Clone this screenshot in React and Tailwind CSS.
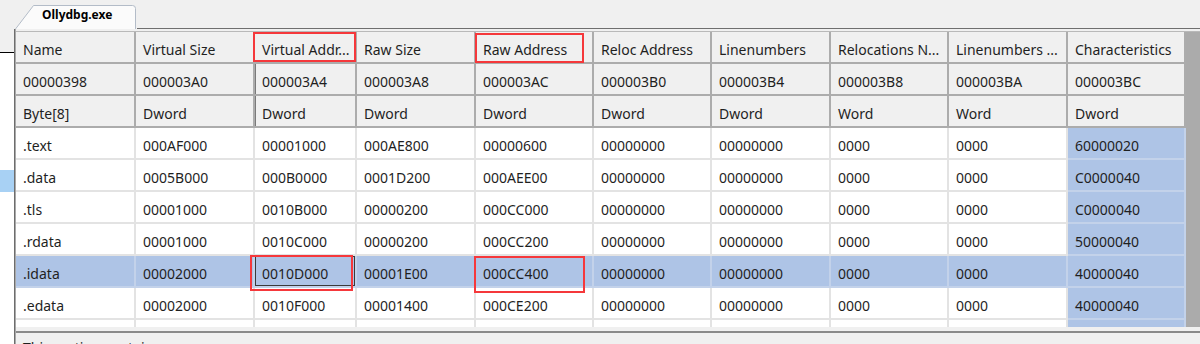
const widths = [
  "w-[120px]",
  "w-[119px]",
  "w-[102px]",
  "w-[119px]",
  "w-[118px]",
  "w-[118px]",
  "w-[119px]",
  "w-[118px]",
  "w-[119px]",
  "w-[118px]",
]

const headRows = [
  ["Name", "Virtual Size", "Virtual Addr...", "Raw Size", "Raw Address", "Reloc Address", "Linenumbers", "Relocations N...", "Linenumbers ...", "Characteristics"],
  ["00000398", "000003A0", "000003A4", "000003A8", "000003AC", "000003B0", "000003B4", "000003B8", "000003BA", "000003BC"],
  ["Byte[8]", "Dword", "Dword", "Dword", "Dword", "Dword", "Dword", "Word", "Word", "Dword"],
]

const sections = [
  [".text", "000AF000", "00001000", "000AE800", "00000600", "00000000", "00000000", "0000", "0000", "60000020"],
  [".data", "0005B000", "000B0000", "0001D200", "000AEE00", "00000000", "00000000", "0000", "0000", "C0000040"],
  [".tls", "00001000", "0010B000", "00000200", "000CC000", "00000000", "00000000", "0000", "0000", "C0000040"],
  [".rdata", "00001000", "0010C000", "00000200", "000CC200", "00000000", "00000000", "0000", "0000", "50000040"],
  [".idata", "00002000", "0010D000", "00001E00", "000CC400", "00000000", "00000000", "0000", "0000", "40000040"],
  [".edata", "00002000", "0010F000", "00001400", "000CE200", "00000000", "00000000", "0000", "0000", "40000040"],
  ["", "", "", "", "", "", "", "", "", ""],
]

const SELECTED_ROW = 4

const FileTab = () => (
  <div className="relative w-[122px] h-[29px] shrink-0">
    <svg className="absolute inset-0" width="122" height="29" viewBox="0 0 122 29">
      <path d="M0.5 29 L18.5 5.5 L117.5 5.5 Q120.5 5.5 120.5 8.5 L120.5 29" fill="#fbfbfb" stroke="#b3bcc8" />
    </svg>
    <div className="relative pt-[8px] pl-[27px] text-[12px] leading-[14px] font-bold text-black">Ollydbg.exe</div>
  </div>
)

const HeaderCell = ({ text, col, row }) => (
  <div
    className={`${widths[col]} h-[32px] shrink-0 flex items-center pt-[5px] pl-[7px] bg-[#f0f0f0] border-r-2 border-b-2 border-[#acacac] whitespace-nowrap overflow-hidden ${
      col === 2 && row > 0 ? "shadow-[inset_1px_0_0_#7a7a7a]" : ""
    }`}
  >
    {text}
  </div>
)

const DataCell = ({ text, col, row }) => {
  const blue = row === SELECTED_ROW || col === 9
  const focused = row === SELECTED_ROW && col === 2
  return (
    <div
      className={`${widths[col]} h-[32px] shrink-0 flex items-center pt-[5px] pl-[7px] border-r-2 border-b-2 whitespace-nowrap overflow-hidden ${
        blue ? "bg-[#aec4e6] border-[#c3d2ea]" : "bg-white border-[#e3e3e3]"
      } ${focused ? "shadow-[inset_0_0_0_1px_#3a3a3a]" : ""}`}
    >
      {text}
    </div>
  )
}

const Annotation = ({ className }) => (
  <div className={`absolute border-2 border-[#f5383b] pointer-events-none ${className}`} />
)

export default function App() {
  return (
    <div className="relative w-[1200px] h-[344px] bg-[#f0f0f0] overflow-hidden flex flex-col font-['Noto_Sans',sans-serif] text-[14px] text-[#1f1f1f]">
      {/* tab strip */}
      <div className="h-[29px] flex shrink-0">
        <div className="w-[15px] shrink-0" />
        <FileTab />
        <div className="flex-1 border-b border-[#6f6f6f]" />
      </div>

      <div className="flex flex-1 min-h-0">
        {/* edge of the tree pane behind */}
        <div className="w-[14px] shrink-0 flex flex-col">
          <div className="h-[23px] shrink-0" />
          <div className="flex-1 bg-white border-t border-black">
            <div className="h-[117px]" />
            <div className="h-[22px] bg-[#a8d1f4]" />
          </div>
        </div>
        <div className="w-[1px] bg-[#6d6d6d] shrink-0" />
        <div className="w-[1px] bg-[#a9a9a9] shrink-0" />

        <div className="flex-1 flex flex-col min-w-0">
          <div className="h-[2px] shrink-0" />
          <div className="h-[1px] bg-[#b9b9b9] shrink-0" />
          <div className="h-[295px] flex shrink-0 overflow-hidden">
            <div className="w-[1170px] shrink-0 flex flex-col">
              {headRows.map((cells, r) => (
                <div key={r} className="flex">
                  {cells.map((t, c) => (
                    <HeaderCell key={c} text={t} col={c} row={r} />
                  ))}
                </div>
              ))}
              {sections.map((cells, r) => (
                <div key={r} className="flex">
                  {cells.map((t, c) => (
                    <DataCell key={c} text={t} col={c} row={r} />
                  ))}
                </div>
              ))}
            </div>
            <div className="flex-1 bg-[#ababab]" />
          </div>
          <div className="h-[4px] shrink-0" />
          <div className="h-[2px] bg-[#8a8a8a] shrink-0" />
          <div className="pt-[5px] pl-[7px] leading-[20px]">This section contains:</div>
        </div>
      </div>

      <Annotation className="left-[253px] top-[32px] w-[103px] h-[30px]" />
      <Annotation className="left-[475px] top-[33px] w-[109px] h-[30px]" />
      <Annotation className="left-[250px] top-[255px] w-[103px] h-[36px]" />
      <Annotation className="left-[474px] top-[256px] w-[111px] h-[37px]" />
    </div>
  )
}
